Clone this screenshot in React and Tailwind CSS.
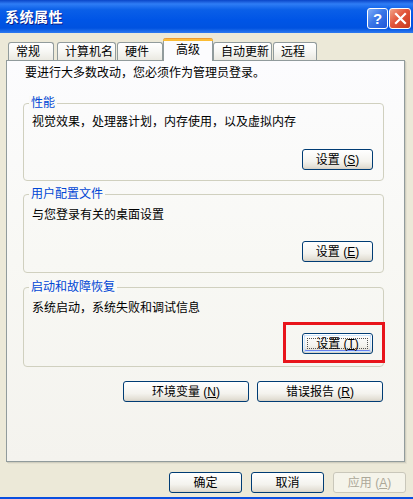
const font = "font-[family-name:'Liberation_Sans','Noto_Sans_CJK_SC',sans-serif]"

function XpButton({ children, className = '', focused = false, disabled = false }) {
  return (
    <button
      className={`h-[21px] rounded-[3px] border text-[12px] leading-[14px] flex items-center justify-center ${
        disabled
          ? 'border-[#C9C7BA] bg-[#F5F4EA] text-[#ACA899]'
          : 'border-[#003C74] text-black bg-[linear-gradient(180deg,#FFFFFF_0%,#F4F3EE_60%,#E3DFD5_90%,#D6D0C5_100%)]'
      } ${className}`}
    >
      {focused ? (
        <span className="flex items-center justify-center w-[calc(100%-2px)] h-[calc(100%-2px)] rounded-[2px] shadow-[inset_0_0_0_1px_#CEE7FF,inset_0_-1px_0_1px_#6982EE]">
          <span className="flex items-center justify-center w-[calc(100%-6px)] h-[calc(100%-6px)] border border-dotted border-[#555]">
            {children}
          </span>
        </span>
      ) : (
        children
      )}
    </button>
  )
}

function Group({ title, text, btn, className = '', focused }) {
  return (
    <div
      className={`relative ml-[16px] w-[361px] border border-[#D0D0BF] rounded-[4px] pl-[8px] pr-[10px] pb-[10px] flex flex-col ${className}`}
    >
      <span className="absolute left-[5px] top-[-8px] px-[2px] bg-[#FAFAF7] text-[12px] leading-[14px] text-[#0046D5]">
        {title}
      </span>
      <div className="text-[12px] leading-[14px] text-black">{text}</div>
      <div className="mt-auto flex justify-end">
        <XpButton className="w-[71px]" focused={focused}>
          设置 ({btn})
        </XpButton>
      </div>
    </div>
  )
}

function Tab({ label, w, selected, className = '' }) {
  if (selected) {
    return (
      <div
        className={`relative z-10 -mb-px h-[23px] ${w} rounded-t-[3px] border-x border-[#919B9C] bg-[#FCFCFE] flex flex-col ${className}`}
      >
        <div className="h-[3px] rounded-t-[3px] bg-[linear-gradient(180deg,#E68B2C_0%,#FFC73C_60%,#F8B42E_100%)] -mx-px" />
        <div className="flex-1 flex items-center justify-center text-[12px] leading-[14px] pb-[2px]">{label}</div>
      </div>
    )
  }
  return (
    <div
      className={`h-[18px] ${w} rounded-t-[3px] border-x border-t border-[#919B9C] bg-[linear-gradient(180deg,#FFFFFF_0%,#F7F7F4_50%,#EAE9E1_100%)] flex items-center pl-[7px] text-[12px] leading-[14px] ${className}`}
    >
      {label}
    </div>
  )
}

export default function App() {
  return (
    <div className={`relative w-[413px] h-[499px] bg-[#ECE9D8] flex flex-col overflow-hidden ${font}`}>
      {/* Title bar */}
      <div className="h-[33px] flex items-center pl-[5px] pr-[2px] bg-[linear-gradient(180deg,#0A45C8_0%,#2F7DF5_12%,#0A5FE8_30%,#0055E6_60%,#0052E0_85%,#2E7AF0_100%)]">
        <span className="text-white font-bold text-[14px] leading-[16px] tracking-[0.5px] [text-shadow:1px_1px_0_#0A1E8A]">
          系统属性
        </span>
        <div className="ml-auto flex gap-[1px] mt-[4px]">
          <div className="w-[21px] h-[21px] rounded-[3px] border border-white bg-[linear-gradient(135deg,#7FAEF8_0%,#3B77E8_45%,#1E56D8_100%)] flex items-center justify-center text-white font-bold text-[15px] leading-none">
            ?
          </div>
          <div className="w-[22px] h-[21px] rounded-[3px] border border-white bg-[linear-gradient(135deg,#F2A58A_0%,#E2553A_45%,#C8381E_100%)] flex items-center justify-center">
            <svg width="13" height="13" viewBox="0 0 13 13">
              <path d="M2 2 L11 11 M11 2 L2 11" stroke="white" strokeWidth="2.2" strokeLinecap="square" />
            </svg>
          </div>
        </div>
      </div>

      {/* Tabs */}
      <div className="mt-[5px] h-[22px] flex items-end pl-[8px]">
        <Tab label="常规" w="w-[46px]" />
        <Tab label="计算机名" w="w-[59px]" className="ml-[3px]" />
        <Tab label="硬件" w="w-[46px]" className="ml-[1px]" />
        <Tab label="高级" w="w-[50px]" selected />
        <Tab label="自动更新" w="w-[59px]" />
        <Tab label="远程" w="w-[44px]" className="ml-[1px]" />
      </div>

      {/* Panel */}
      <div className="ml-[6px] w-[399px] h-[402px] border border-[#919B9C] shadow-[1px_1px_0_#D0CEBF,2px_2px_0_#E3E0D0] bg-[linear-gradient(180deg,#FCFCFE_0%,#F8F8F4_50%,#F4F3EE_100%)] flex flex-col">
        <div className="mt-[5px] ml-[18px] text-[12px] leading-[14px] text-black">
          要进行大多数改动，您必须作为管理员登录。
        </div>
        <Group
          className="mt-[23px] h-[78px] pt-[11px]"
          title="性能"
          text="视觉效果，处理器计划，内存使用，以及虚拟内存"
          btn={<u>S</u>}
        />
        <Group
          className="mt-[13px] h-[79px] pt-[13px]"
          title="用户配置文件"
          text="与您登录有关的桌面设置"
          btn={<u>E</u>}
        />
        <Group
          className="mt-[14px] h-[80px] pt-[13px] pb-[12px]"
          title="启动和故障恢复"
          text="系统启动，系统失败和调试信息"
          btn={<u>T</u>}
          focused
        />
        <div className="mt-[14px] flex justify-end gap-[8px] pr-[21px]">
          <XpButton className="w-[126px]">
            环境变量 (<u>N</u>)
          </XpButton>
          <XpButton className="w-[126px]">
            错误报告 (<u>R</u>)
          </XpButton>
        </div>
      </div>

      {/* Dialog buttons */}
      <div className="mt-[10px] flex justify-end gap-[9px] pr-[7px]">
        <XpButton className="w-[73px] h-[20px]">确定</XpButton>
        <XpButton className="w-[73px] h-[20px]">取消</XpButton>
        <XpButton className="w-[73px] h-[20px]" disabled>
          应用 (<u>A</u>)
        </XpButton>
      </div>

      <div className="mt-auto h-[2px] bg-[#0A4FE0]" />

      {/* Red annotation box */}
      <div className="absolute left-[283px] top-[322px] w-[102px] h-[41px] border-[3px] border-[#E8141B]" />
    </div>
  )
}
